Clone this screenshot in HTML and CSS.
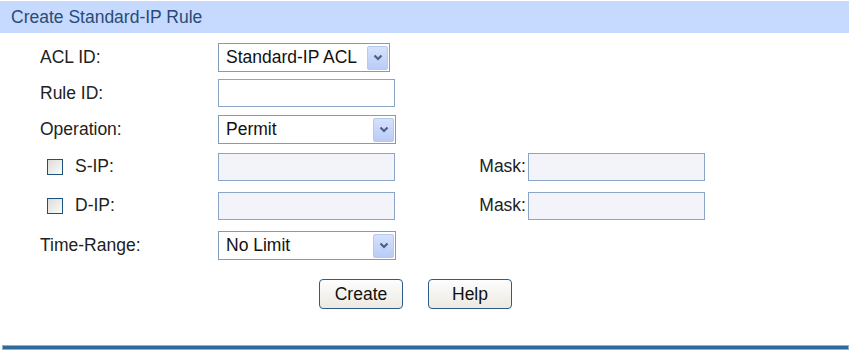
FILE: index.html
```html
<!DOCTYPE html>
<html>
<head>
  <title>Create Standard-IP Rule</title>
  <link rel="stylesheet" href="styles.css">
</head>
<body>
  <div class="panel">
    <div class="panel-title">Create Standard-IP Rule</div>
    <form class="rule-form">
      <div class="row">
        <label class="name">ACL ID:</label>
        <div class="select-wrap acl">
          <select><option>Standard-IP ACL</option></select>
          <span class="arrow"><svg width="10" height="7" viewBox="0 0 10 7"><path d="M1.5 1.5 L5 5 L8.5 1.5" fill="none" stroke="#4d6185" stroke-width="2.2"/></svg></span>
        </div>
      </div>
      <div class="row">
        <label class="name">Rule ID:</label>
        <input type="text" class="field">
      </div>
      <div class="row">
        <label class="name">Operation:</label>
        <div class="select-wrap">
          <select><option>Permit</option><option>Deny</option></select>
          <span class="arrow"><svg width="10" height="7" viewBox="0 0 10 7"><path d="M1.5 1.5 L5 5 L8.5 1.5" fill="none" stroke="#4d6185" stroke-width="2.2"/></svg></span>
        </div>
      </div>
      <div class="row ip">
        <label class="name"><span class="check"></span>S-IP:</label>
        <input type="text" class="field off" disabled>
        <label class="mask">Mask:</label>
        <input type="text" class="field off" disabled>
      </div>
      <div class="row ip">
        <label class="name"><span class="check"></span>D-IP:</label>
        <input type="text" class="field off" disabled>
        <label class="mask">Mask:</label>
        <input type="text" class="field off" disabled>
      </div>
      <div class="row last">
        <label class="name">Time-Range:</label>
        <div class="select-wrap">
          <select><option>No Limit</option></select>
          <span class="arrow"><svg width="10" height="7" viewBox="0 0 10 7"><path d="M1.5 1.5 L5 5 L8.5 1.5" fill="none" stroke="#4d6185" stroke-width="2.2"/></svg></span>
        </div>
      </div>
      <div class="actions">
        <button type="button" class="btn">Create</button>
        <button type="button" class="btn">Help</button>
      </div>
    </form>
    <div class="bottom-line"></div>
  </div>
</body>
</html>
```

FILE: styles.css
```css
body {
  margin: 0;
  background-color: #fff;
  font-family: "Liberation Sans", Arial, sans-serif;
  font-size: 17.5px;
  color: #222;
}

.panel {
  width: 850px;
  padding-top: 1px;
}

.panel-title {
  width: 838px;
  height: 32px;
  line-height: 32px;
  padding-left: 11px;
  background-color: #c6daff;
  color: #2b4a75;
}

.rule-form {
  padding-left: 40px;
  margin-top: 6px;
}

.row {
  display: grid;
  grid-template-columns: 178px 177px 133px 177px;
  align-items: center;
  height: 36px;
}

.row.ip {
  height: 39px;
}

.row.last {
  height: 40px;
}

.name {
  display: flex;
  align-items: center;
}

.check {
  display: inline-block;
  width: 14px;
  height: 14px;
  margin-left: 7px;
  margin-right: 12px;
  border: 1px solid #1c5180;
  background: linear-gradient(135deg, #dcdcd7, #fbfbfa);
}

.mask {
  text-align: right;
  padding-right: 2px;
}

.field {
  box-sizing: border-box;
  width: 177px;
  height: 28px;
  margin: 0;
  border: 1px solid #8ba5c6;
  background-color: #fff;
  font: inherit;
}

.field.off {
  background-color: #f3f4fa;
}

.select-wrap {
  position: relative;
  width: 178px;
  height: 29px;
}

.select-wrap.acl {
  width: 172px;
}

.select-wrap select {
  box-sizing: border-box;
  width: 100%;
  height: 100%;
  margin: 0;
  padding: 0 0 0 7px;
  border: 1px solid #7f9db9;
  background-color: #fff;
  font: inherit;
  color: #111;
  appearance: none;
  -webkit-appearance: none;
}

.arrow {
  position: absolute;
  top: 3px;
  right: 2px;
  width: 19px;
  height: 22px;
  display: flex;
  align-items: center;
  justify-content: center;
  border: 1px solid #b7c9f0;
  border-radius: 2px;
  background: linear-gradient(#d6e2fc, #b8ccf6);
}

.actions {
  display: flex;
  gap: 25px;
  margin-top: 14px;
  padding-left: 279px;
}

.btn {
  width: 84px;
  height: 30px;
  border: 1px solid #2e5b8c;
  border-radius: 4px;
  background: linear-gradient(#fdfdfd, #ece9e0);
  font: inherit;
  color: #111;
}

.bottom-line {
  margin: 36px 0 0 2px;
  width: 845px;
  height: 3px;
  background-color: #2f6a9c;
  border: 1px solid #8db0d2;
}
```
